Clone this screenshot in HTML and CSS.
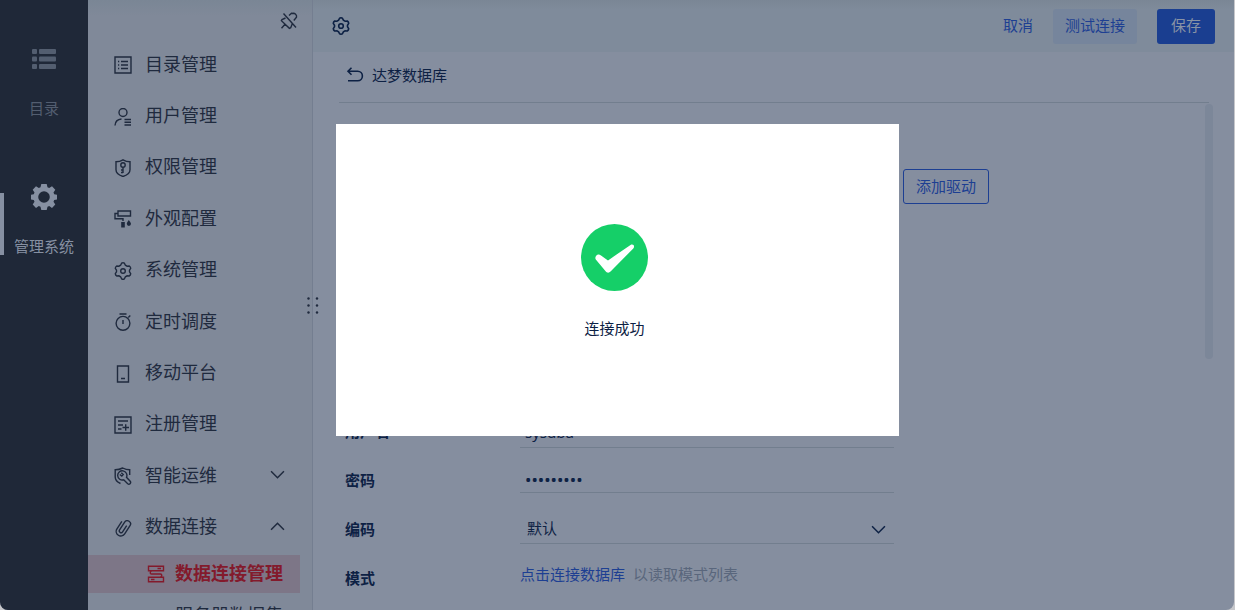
FILE: index.html
```html
<!DOCTYPE html>
<html lang="zh-CN">
<head>
<meta charset="utf-8">
<title>数据连接管理</title>
<link rel="stylesheet" href="styles.css">
</head>
<body>
<svg class="defs" aria-hidden="true">
  <symbol id="gear" viewBox="0 0 18 18">
    <path d="M6.600 3.200 7.600 1.200Q9 .4 10.400 1.200L11.400 3.200 13.100 4.200 15.300 4Q16.600 4.900 16.700 6.400L15.500 8.200V9.800L16.700 11.600Q16.600 13.100 15.300 14L13.100 13.800 11.400 14.800 10.400 16.800Q9 17.600 7.600 16.800L6.600 14.800 4.900 13.800 2.700 14Q1.400 13.100 1.300 11.600L2.500 9.800V8.200L1.300 6.400Q1.400 4.900 2.700 4L4.900 4.200z"/>
    <circle cx="9" cy="9" r="2.300"/>
  </symbol>
</svg>
<div class="app">
  <nav class="rail">
    <a class="rail-item" href="#">
      <svg class="rail-icon" viewBox="0 0 26 26"><g fill="currentColor"><rect x="1" y="3" width="5" height="5" rx="1"/><rect x="8" y="3" width="17" height="5" rx="1"/><rect x="1" y="10.500" width="5" height="5" rx="1"/><rect x="8" y="10.500" width="17" height="5" rx="1"/><rect x="1" y="18" width="5" height="5" rx="1"/><rect x="8" y="18" width="17" height="5" rx="1"/></g></svg>
      <span>目录</span>
    </a>
    <a class="rail-item rail-item-active" href="#">
      <svg class="rail-icon" viewBox="0 0 26 26"><path fill="currentColor" fill-rule="evenodd" d="M9.500 3.300 10.300 0h5.400l.8 3.300 1.700.8 2.800-1.800 3.300 3.400-1.800 2.800.7 1.800 2.800.5v4.600l-2.800.5-.7 1.800 1.800 2.800-3.300 3.400-2.800-1.800-1.700.7-.8 3.200h-5.400l-.8-3.200-1.700-.7L5 23.900l-3.300-3.400 1.800-2.800-.7-1.800-2.800-.5v-4.600l2.800-.5.700-1.800-1.800-2.800L5 2.300l2.800 1.800zM13 7.200a5.800 5.800 0 1 0 0 11.600 5.800 5.800 0 0 0 0-11.600z"/></svg>
      <span>管理系统</span>
    </a>
  </nav>

  <aside class="sidebar">
    <button class="pin" type="button" aria-label="取消固定"><svg viewBox="0 0 18 18"><path d="m3.500 1.500 12.500 14M9 3.500l2.500-2.200 2 .2M12.500 1.400c2.300-.7 4.600 1.500 4 3.800L13.800 8.500M5.500 6 2 7.500l-.6 1.200 8 7.600 1.300-.6L12.200 12M5 12.200l-3.500 4"/></svg></button>
    <ul class="menu">
      <li><a class="menu-item" href="#"><svg viewBox="0 0 18 18"><path d="M1 1h16v16H1zM4 5.500h1.200M7 5.500h7M4 9h1.200M7 9h7M4 12.500h1.200M7 12.500h7"/></svg><span>目录管理</span></a></li>
      <li><a class="menu-item" href="#"><svg viewBox="0 0 18 18"><circle cx="9" cy="4.500" r="4"/><path d="M1 17.500c.2-4 2.300-6.200 6.500-6.500M10.500 11.500H17M10.500 14.300H17M10.500 17H17"/></svg><span>用户管理</span></a></li>
      <li><a class="menu-item" href="#"><svg viewBox="0 0 18 18"><path d="M9 .8c2.300 1.400 4.600 2 7 2v8c0 3-2.500 5.300-7 6.700-4.500-1.400-7-3.700-7-6.700v-8c2.400 0 4.700-.6 7-2zM9 8.200V14M9 11H7M9 13.500H7"/><circle cx="9" cy="6" r="2.200"/></svg><span>权限管理</span></a></li>
      <li><a class="menu-item" href="#"><svg viewBox="0 0 18 18"><path d="M4 1h12.500v5H4zM4 3.500H1v5.200h8V11"/><path class="solid" d="M7.200 12h3.600v5.500H7.200zM14.800 10s2.200 2.600 2.200 3.800a2.100 2.100 0 0 1-4.200 0C12.800 12.600 14.800 10 14.800 10z"/></svg><span>外观配置</span></a></li>
      <li><a class="menu-item" href="#"><svg><use href="#gear"/></svg><span>系统管理</span></a></li>
      <li><a class="menu-item" href="#"><svg viewBox="0 0 18 18"><circle cx="9" cy="10.300" r="6.900"/><path d="M5.500 1h7M9 7v4M14.300 4.500l2-2"/></svg><span>定时调度</span></a></li>
      <li><a class="menu-item" href="#"><svg viewBox="0 0 18 18"><path d="M3.500 1h11v16h-11zM7 13.500h4"/></svg><span>移动平台</span></a></li>
      <li><a class="menu-item" href="#"><svg viewBox="0 0 18 18"><path d="M1 1h16v16H1zM4 5h10M4 9h5M4 13h3.500M8.500 11.500H15M11.700 8.300v6.400"/></svg><span>注册管理</span></a></li>
      <li><a class="menu-item" href="#"><svg viewBox="0 0 18 18"><path d="M6.500 16.500C3 15 1.200 13 1.200 10V2.800C4 2.800 6.300 2.200 8.700 1c2.300 1.200 4.500 1.800 7 1.800V8"/><path d="M12.500 10.300a4.600 4.600 0 1 0-2.800 2.500l4 4c1.700 1.200 3.800-.8 2.500-2.500zM7.300 5.700l1.900 1.800-1.400 1.500-2-1.500"/></svg><span>智能运维</span><svg class="chevron" viewBox="0 0 14 8"><path d="m1 1 6 6 6-6"/></svg></a></li>
      <li><a class="menu-item" href="#"><svg viewBox="0 0 18 18"><path transform="rotate(33 9 9)" d="M10.800 5v7.500a1.800 1.800 0 0 1-3.600 0V3.200a3.200 3.200 0 0 1 6.400 0V13a4.600 4.600 0 0 1-9.200 0V4"/></svg><span>数据连接</span><svg class="chevron" viewBox="0 0 14 8"><path d="m1 7 6-6 6 6"/></svg></a></li>
    </ul>
    <ul class="submenu">
      <li><a class="submenu-item submenu-item-active" href="#"><svg viewBox="0 0 18 18"><path d="M1.500 1.200h15v4.600h-15zM1.500 12.200h15v4.600h-15zM4.500 6C2.800 7 2.800 9 4.500 9h9c1.700 0 1.700 2 0 3M10.500 3.500H14M4 14.500h3.500"/></svg><span>数据连接管理</span></a></li>
      <li><a class="submenu-item" href="#"><span class="submenu-gap"></span><span>服务器数据集</span></a></li>
    </ul>
    <svg class="grip" viewBox="0 0 12 17"><circle cx="1.500" cy="1.500" r="1.200"/><circle cx="10" cy="1.500" r="1.200"/><circle cx="1.500" cy="8.500" r="1.200"/><circle cx="10" cy="8.500" r="1.200"/><circle cx="1.500" cy="15.500" r="1.200"/><circle cx="10" cy="15.500" r="1.200"/></svg>
  </aside>

  <main class="main">
    <header class="toolbar">
      <button class="icon-button" type="button" aria-label="设置"><svg><use href="#gear"/></svg></button>
      <div class="actions">
        <button class="button button-text" type="button">取消</button>
        <button class="button button-soft" type="button">测试连接</button>
        <button class="button button-primary" type="button">保存</button>
      </div>
    </header>
    <div class="title-bar">
      <button class="icon-button" type="button" aria-label="返回"><svg viewBox="0 0 18 18"><path d="M5.500 1.800 2 5.300l3.500 3.500M2 5.300h9.700a4.700 4.700 0 0 1 0 9.400H2"/></svg></button>
      <h1>达梦数据库</h1>
    </div>
    <div class="content">
      <form class="form">
        <div class="row driver-row"><button class="button button-outline" type="button">添加驱动</button></div>
        <div class="row">
          <label for="user">用户名</label>
          <input class="field field-user" id="user" type="text" value="sysdba">
        </div>
        <div class="row">
          <label for="password">密码</label>
          <input class="field field-password" id="password" type="password" value="123456789">
        </div>
        <div class="row">
          <label for="encoding">编码</label>
          <div class="select-wrap">
            <select class="field field-select" id="encoding"><option>默认</option></select>
            <svg class="chevron" viewBox="0 0 14 8"><path d="m1 1 6 6 6-6"/></svg>
          </div>
        </div>
        <div class="row">
          <span class="row-name">模式</span>
          <p class="schema"><a href="#">点击连接数据库</a><span>以读取模式列表</span></p>
        </div>
      </form>
      <div class="scroll-thumb"></div>
    </div>
  </main>
</div>

<div class="overlay">
  <div class="dialog" role="dialog" aria-labelledby="dialog-text">
    <svg class="success" viewBox="0 0 67 67"><circle cx="33.500" cy="33.500" r="33.500" fill="#15cf68"/><path d="M14.700 32.500c1-2.200 3.300-2.700 5.300-1.100l7 5 22.500-15.500c2.700-1.700 4.800 1.300 2.800 3.500L29.800 47.300c-1.700 1.800-3.800 1.800-5.400-.2L15 35.800c-.8-1-.8-2.200-.3-3.300z" fill="#fff"/></svg>
    <p id="dialog-text">连接成功</p>
  </div>
</div>
</body>
</html>
```
FILE: styles.css
```css
* { box-sizing: border-box; }

body {
  margin: 0;
  background: #c6c7cb;
  color: #0d2144;
  font: 15px/20px "Noto Sans", "Noto Sans CJK SC", sans-serif;
}

a { color: inherit; text-decoration: none; }
ul { list-style: none; margin: 0; padding: 0; }
p, h1 { margin: 0; }
button { border: 0; padding: 0; background: none; color: inherit; font: inherit; }

svg {
  flex: none;
  width: 18px;
  height: 18px;
  fill: none;
  stroke: currentColor;
  stroke-width: 1.4;
}

.solid { fill: currentColor; stroke: none; }
.defs { position: absolute; width: 0; height: 0; }
.chevron { width: 15px; height: 9px; }

.app {
  display: flex;
  height: 100vh;
  margin-right: 1px;
  overflow: hidden;
  border-radius: 0 0 8px 8px;
  background: #858e9f;
}

/* Left rail */
.rail {
  flex: none;
  width: 88px;
  padding-top: 46px;
  background: #1f2838;
}

.rail-item {
  display: flex;
  flex-direction: column;
  align-items: center;
  gap: 26px;
  height: 138px;
  color: #535e70;
}

.rail-item-active { position: relative; color: #8690a2; }

.rail-item-active::before {
  content: "";
  position: absolute;
  left: 0;
  top: 9px;
  width: 4px;
  height: 62px;
  background: #8690a2;
}

.rail-icon { width: 26px; height: 26px; stroke: none; }

/* Sidebar menu */
.sidebar {
  position: relative;
  flex: none;
  width: 225px;
  padding-right: 12px;
  border-right: 1px solid #747e90;
  background: linear-gradient(#7a8695, #808999 16px);
  color: #1f2a3e;
  font-size: 18px;
  line-height: 26px;
}

.pin {
  display: block;
  height: 38px;
  margin-left: auto;
  padding: 4px 2px 0 0;
}

.pin svg { display: block; }

.menu {
  display: grid;
  grid-auto-rows: 1fr;
  height: 514px;
}

.menu-item {
  display: flex;
  align-items: center;
  gap: 13px;
  height: 100%;
  padding: 0 15px 0 26px;
}

.menu-item svg { margin-top: 3px; }
.menu-item .chevron { margin: 0 0 0 auto; }

.submenu { padding-top: 3px; }

.submenu-item {
  display: flex;
  align-items: center;
  gap: 10px;
  height: 38px;
  margin-bottom: 4px;
  padding: 0 0 2px 59px;
  white-space: nowrap;
}

.submenu-item svg { margin-top: 2px; }

.submenu-item-active {
  background: #7d7687;
  color: #831a2c;
  font-weight: 700;
}

.submenu-gap { width: 18px; }

.grip {
  position: absolute;
  right: -7px;
  top: 297px;
  width: 12px;
  height: 17px;
  fill: currentColor;
  stroke: none;
}

/* Main area */
.main { flex: 1; min-width: 0; }

.toolbar {
  display: flex;
  align-items: center;
  justify-content: space-between;
  height: 52px;
  padding: 0 19px;
  background: linear-gradient(#7a8695, #7f8b9b 10px);
}

.icon-button svg { display: block; stroke-width: 1.6; }

.actions { display: flex; gap: 20px; }

.button {
  height: 35px;
  padding: 0 12px 2px;
  border-radius: 3px;
  color: #1d3f92;
}

.button-text { padding: 0 0 2px; }
.button-soft { background: #76859c; }
.button-primary { padding: 0 14px 2px; background: #1a3e90; color: #8993a5; }
.button-outline { border: 1px solid #1d3f92; }

.title-bar {
  display: flex;
  align-items: center;
  gap: 8px;
  height: 51px;
  margin: 0 25px 0 26px;
  padding: 0 0 4px 7px;
  border-bottom: 1px solid #727e8e;
}

.title-bar h1 { font-size: 15px; font-weight: 400; }

.content { display: flex; }

.form { flex: 1; min-width: 0; padding: 66px 0 0 32px; }

.row {
  display: grid;
  grid-template-columns: 175px minmax(0, 374px) auto;
  justify-content: start;
  height: 49px;
}

.row label, .row-name { font-weight: 700; line-height: 47px; }

.driver-row { height: 35px; margin-bottom: 204px; }
.driver-row .button { grid-column: 3; margin-left: 9px; }

.field {
  width: 100%;
  margin: 0;
  padding: 8px 6px 0 5px;
  border: 0;
  border-bottom: 1px solid #727e8e;
  border-radius: 0;
  outline: 0;
  background: transparent;
  color: inherit;
  font: inherit;
  appearance: none;
}

.field-user { height: 40px; }
.field-password { height: 36px; padding-top: 10px; font-size: 17px; }
.field-select { height: 38px; padding: 6px 6px 0 7px; }

.select-wrap { position: relative; height: 38px; }

.select-wrap .chevron { position: absolute; right: 8px; top: 19px; }

.schema {
  display: flex;
  gap: 8px;
  line-height: 38px;
  color: #59667c;
}

.schema a { color: #1d3f92; }

.scroll-thumb {
  width: 8px;
  height: 255px;
  margin: 1px 21px 0 0;
  border-radius: 4px;
  background: #7c8799;
}

/* Result dialog */
.overlay {
  position: fixed;
  inset: 0;
  display: flex;
  align-items: flex-start;
  justify-content: center;
  padding-top: 124px;
}

.dialog {
  display: flex;
  flex-direction: column;
  align-items: center;
  gap: 27px;
  width: 563px;
  max-width: 100%;
  padding: 100px 6px 98px 0;
  background: #fff;
}

.success { width: 67px; height: 67px; stroke: none; }
```
